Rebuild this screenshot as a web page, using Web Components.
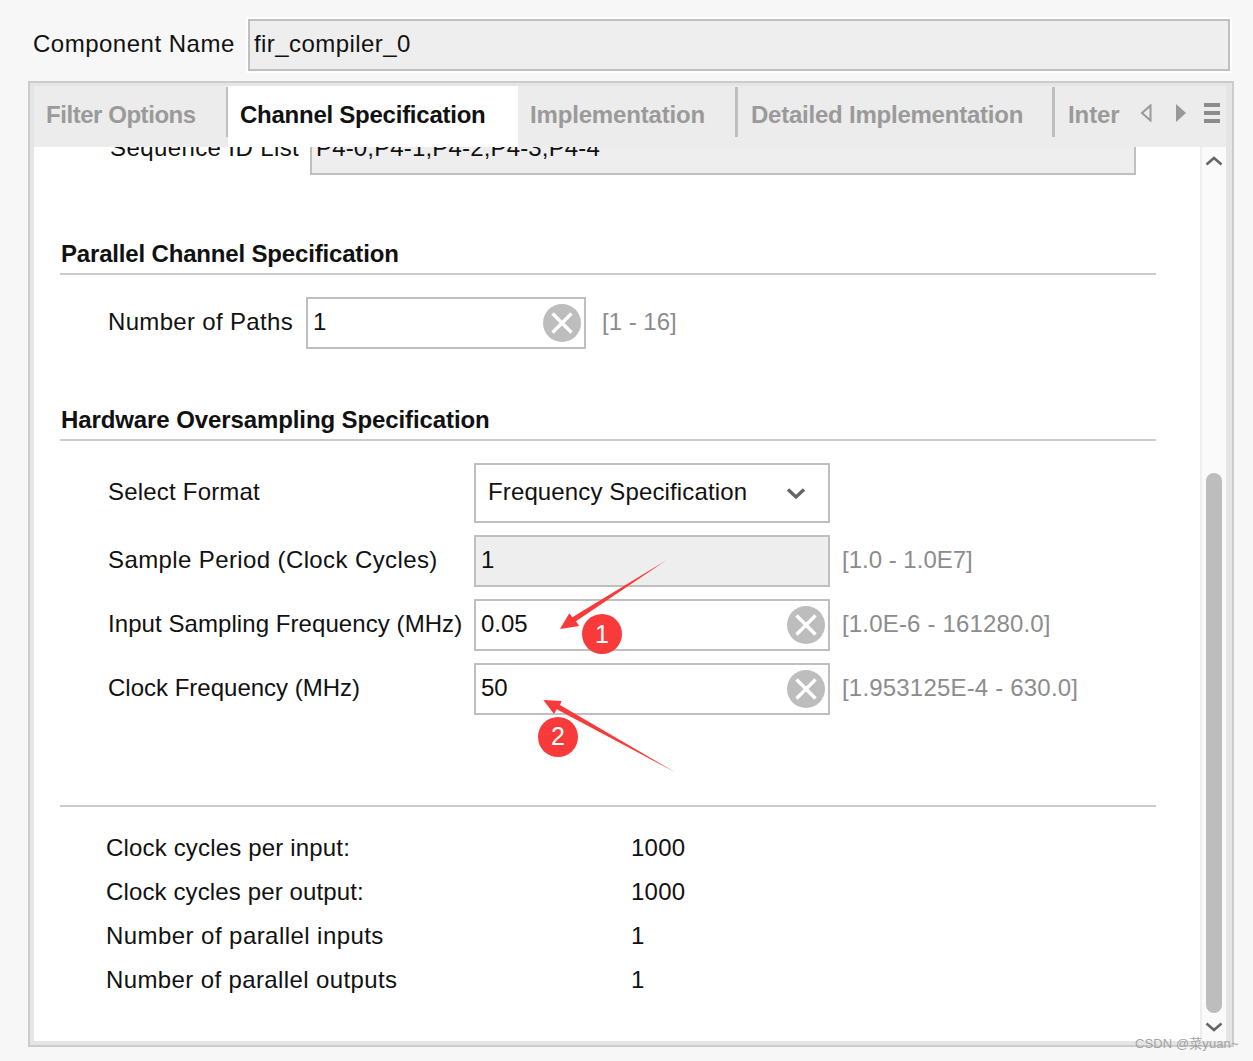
<!doctype html>
<html><head><meta charset="utf-8">
<style>
html,body{margin:0;padding:0;background:#f7f7f7}
body{width:1253px;height:1061px;overflow:hidden;position:relative;font:24px/1.2 "Liberation Sans",Arial,sans-serif;color:#111}
</style></head><body>
<x-name-row label="Component Name" value="fir_compiler_0"></x-name-row>
<x-panel>
  <x-tab slot="tabs" w="194" pad="12" ls="-.45" sep-thin>Filter Options</x-tab>
  <x-tab slot="tabs" w="290" pad="12" ls="-.25" active>Channel Specification</x-tab>
  <x-tab slot="tabs" w="219" pad="12" ls="-.17" sep>Implementation</x-tab>
  <x-tab slot="tabs" w="317" pad="14" ls="-.23" sep>Detailed Implementation</x-tab>
  <x-tab slot="tabs" w="79" pad="14" ls="-.1">Inter</x-tab>
  <x-tab-tools slot="tabs"></x-tab-tools>

  <x-row style="margin-top:-24px;padding-left:76px" lw="200" ls=".4" label="Sequence ID List">
    <x-field w="826" disabled ls=".16" style="padding-left:4px" value="P4-0,P4-1,P4-2,P4-3,P4-4"></x-field>
  </x-row>

  <x-section style="margin-top:59px;letter-spacing:-.17px">Parallel Channel Specification</x-section>
  <x-row style="margin-top:22px" lw="198" ls=".33" label="Number of Paths">
    <x-field w="280" clear value="1"></x-field><x-range style="margin-left:16px">[1 - 16]</x-range>
  </x-row>

  <x-section style="margin-top:51px">Hardware Oversampling Specification</x-section>
  <x-row style="margin-top:22px" lw="366" ls=".2" label="Select Format">
    <x-select w="356" value="Frequency Specification"></x-select>
  </x-row>
  <x-row style="margin-top:12px" lw="366" ls=".39" label="Sample Period (Clock Cycles)">
    <x-field w="356" disabled value="1"></x-field><x-range>[1.0 - 1.0E7]</x-range>
  </x-row>
  <x-row style="margin-top:12px" lw="366" ls=".07" label="Input Sampling Frequency (MHz)">
    <x-field w="356" clear value="0.05"></x-field><x-range style="letter-spacing:.17px">[1.0E-6 - 161280.0]</x-range>
  </x-row>
  <x-row style="margin-top:12px" lw="366" label="Clock Frequency (MHz)">
    <x-field w="356" clear value="50"></x-field><x-range style="letter-spacing:.19px">[1.953125E-4 - 630.0]</x-range>
  </x-row>

  <x-section style="margin-top:51px"></x-section>
  <x-stat style="margin-top:19px" ls=".17" label="Clock cycles per input:" value="1000"></x-stat>
  <x-stat ls=".13" label="Clock cycles per output:" value="1000"></x-stat>
  <x-stat ls=".44" label="Number of parallel inputs" value="1"></x-stat>
  <x-stat ls=".38" label="Number of parallel outputs" value="1"></x-stat>
</x-panel>
<x-callouts></x-callouts>
<x-watermark>CSDN @菜yuan~</x-watermark>
<script>
const def=(name,css,html,extra={})=>{
  customElements.define(name,class extends HTMLElement{
    connectedCallback(){
      if(this.shadowRoot)return;
      const r=this.attachShadow({mode:'open'});
      const a=n=>this.getAttribute(n);
      r.innerHTML='<style>'+css+'</style>'+html(a,this);
      if(a('w')&&extra.width)this.style.width=a('w')+'px';
    }
  });
};
const clearIcon=`<svg width="38" height="38" viewBox="0 0 38 38"><circle cx="19" cy="19" r="19" fill="#bdbdbd"/><path d="M9.5 9.5 28.5 28.5M28.5 9.5 9.5 28.5" stroke="#fff" stroke-width="3.4" fill="none"/></svg>`;

def('x-name-row',`:host{display:flex;align-items:center;height:52px;padding:19px 23px 10px 33px;box-sizing:content-box}
 .l{width:215px;letter-spacing:.5px;padding-bottom:2px}
 .f{flex:1;box-sizing:border-box;height:52px;background:#eee;border:2px solid #bfbfbf;outline:2px solid #fff;display:flex;align-items:center;padding:0 0 2px 4px;letter-spacing:.43px}`,
 a=>`<div class="l">${a('label')}</div><div class="f">${a('value')}</div>`);

def('x-panel',`:host{display:block;box-sizing:border-box;margin-left:28px;width:1206px;height:966px;border:2px solid #ccc;padding:3px 6px 4px 4px;background:#e5e5e5}
 .tabs{display:flex;height:61px;background:#ececec}
 .body{display:flex;height:894px;background:#fff}
 .content{flex:1;min-width:0;overflow:hidden;background:#fff}
 .sb{width:26px;box-sizing:border-box;background:#fafafa;border-left:2px solid #eee;display:flex;flex-direction:column;align-items:center}
 .up,.down{height:28px;display:flex;align-items:center;justify-content:center;flex:none}
 .track{flex:1;padding-top:298px;box-sizing:border-box;width:16px;display:flex;flex-direction:column}
 .thumb{flex:1;background:#bdbdbd;border-radius:8px}`,
 ()=>`<div class="tabs"><slot name="tabs"></slot></div>
 <div class="body"><div class="content"><slot></slot></div>
 <div class="sb"><div class="up"><svg width="18" height="10" viewBox="0 0 18 10"><path d="M1.5 8.5 9 2l7.5 6.5" fill="none" stroke="#666" stroke-width="2.6"/></svg></div>
 <div class="track"><div class="thumb"></div></div>
 <div class="down"><svg width="18" height="10" viewBox="0 0 18 10"><path d="M1.5 1.5 9 8l7.5-6.5" fill="none" stroke="#666" stroke-width="2.6"/></svg></div></div></div>`);

def('x-tab',`:host{display:block;box-sizing:border-box;height:61px;flex:none;font-weight:700;color:#9a9a9a;white-space:nowrap;position:relative}
 :host([active]){background:#fff;color:#111}
 .t{height:58px;display:flex;align-items:center}
 :host([sep])::after{content:"";position:absolute;right:-1px;top:1px;width:3px;height:50px;background:#bfbfbf}
 :host([sep-thin])::after{content:"";position:absolute;right:0;top:1px;width:2px;height:50px;background:#bfbfbf}`,
 a=>`<div class="t" style="padding-left:${a('pad')}px;letter-spacing:${a('ls')}px"><slot></slot></div>`,{width:true});

def('x-tab-tools',`:host{display:flex;flex:1;height:54px;align-items:center}
 svg{display:block;flex:none}`,
 ()=>`<svg width="14" height="18" viewBox="0 0 14 18" style="margin-left:7px"><path d="M10.5 1.5 2 9l8.5 7.5z" fill="#ececec" stroke="#999" stroke-width="2"/></svg>
 <svg width="12" height="18" viewBox="0 0 12 18" style="margin-left:21px"><path d="M1 0 11 9 1 18z" fill="#999"/></svg>
 <svg width="16" height="20" viewBox="0 0 16 20" style="margin-left:17px"><path d="M0 0h16v4H0zM0 8h16v4H0zM0 16h16v4H0z" fill="#8c8c8c"/></svg>`);

def('x-section',`:host{display:block;box-sizing:border-box;height:41px;margin-left:26px;padding-left:1px;width:1096px;border-bottom:2px solid #ccc;font-weight:700;padding-top:5px;line-height:30px;letter-spacing:-.1px;white-space:nowrap}`,
 ()=>`<slot></slot>`);

def('x-row',`:host{display:flex;align-items:center;padding-left:74px}
 .l{flex:none;white-space:nowrap;padding-bottom:2px}`,
 a=>`<div class="l" style="width:${a('lw')}px;letter-spacing:${a('ls')||0}px">${a('label')}</div><slot></slot>`);

def('x-field',`:host{display:flex;box-sizing:border-box;height:52px;border:2px solid #bfbfbf;background:#fff;align-items:center;justify-content:space-between;padding:0 3px 0 5px;flex:none}
 :host([disabled]){background:#eee}
 span{padding-bottom:2px}`,
 (a,el)=>`<span style="letter-spacing:${a('ls')||0}px">${a('value')}</span>${el.hasAttribute('clear')?clearIcon:''}`,{width:true});

def('x-select',`:host{display:flex;box-sizing:border-box;height:60px;border:2px solid #bfbfbf;background:#fff;align-items:center;justify-content:space-between;padding:0 22px 0 12px;flex:none}
 span{letter-spacing:.13px;padding-bottom:2px}`,
 a=>`<span>${a('value')}</span><svg width="20" height="13" viewBox="0 0 20 13"><path d="M2 2.5 10 10l8-7.5" fill="none" stroke="#666" stroke-width="3.4"/></svg>`,{width:true});

def('x-range',`:host{display:block;margin-left:12px;color:#8c8c8c;white-space:nowrap;flex:none;padding-bottom:2px}`,()=>`<slot></slot>`);

def('x-stat',`:host{display:flex;align-items:center;height:44px;padding-left:72px}
 .l{width:525px;white-space:nowrap}
 .v{letter-spacing:.25px}`,
 a=>`<div class="l" style="letter-spacing:${a('ls')||0}px">${a('label')}</div><div class="v">${a('value')}</div>`);

def('x-callouts',`:host{position:absolute;left:0;top:0;width:1253px;height:1061px;display:block;pointer-events:none}
 svg{position:absolute;left:0;top:0}
 text{font:25px "Liberation Sans",Arial,sans-serif;fill:#fff;text-anchor:middle}`,
 ()=>`<svg width="1253" height="1061" viewBox="0 0 1253 1061">
 <path d="M666.7 560 572.3 617.3 569.3 613.3 560 629 579.3 626 576 621.3Z" fill="#f93a3a"/>
 <circle cx="602" cy="634" r="20" fill="#f93a3a"/><text x="602" y="643">1</text>
 <path d="M676 772.7 560 705 561.7 701 543.3 700 554 714 556.7 709.3Z" fill="#f93a3a"/>
 <circle cx="558" cy="737" r="20" fill="#f93a3a"/><text x="558" y="745">2</text>
 </svg>`);

def('x-watermark',`:host{position:absolute;left:1135px;top:1036px;font:13px/16px "Liberation Sans","Noto Sans CJK SC",sans-serif;color:#a3a3a3;white-space:nowrap;letter-spacing:.1px}`,
 ()=>`<slot></slot>`);
</script>
</body></html>
